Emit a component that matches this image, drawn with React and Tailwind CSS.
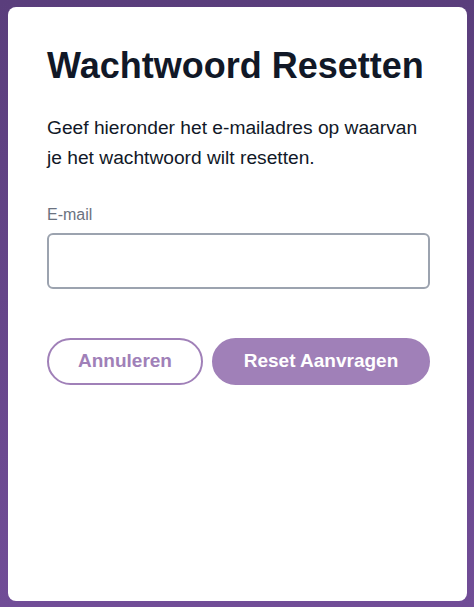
export default function App() {
  return (
    <div
      className="flex h-screen w-full bg-gradient-to-b from-[#5a3e7c] to-[#714d97] pt-[7px] pb-[6px] pl-2 pr-[7px]"
      style={{ fontFamily: '"Liberation Sans", Arial, sans-serif' }}
    >
      <div className="flex flex-1 flex-col rounded-lg bg-white pl-[39px] pr-[37px] pt-[39px]">
        <h1 className="text-[36px] font-bold leading-[40px] text-[#111827]">
          Wachtwoord Resetten
        </h1>
        <p className="mt-[27px] text-[19.2px] leading-[30px] text-[#111827]">
          Geef hieronder het e-mailadres op waarvan je het wachtwoord wilt resetten.
        </p>
        <label className="mt-[30px] block text-base leading-6 text-[#6b7280]">E-mail</label>
        <input
          type="email"
          className="mt-[6px] h-[56px] w-full rounded-md border-2 border-[#9ca3af] bg-white px-3 text-base outline-none"
        />
        <div className="mt-[49px] flex gap-[9px]">
          <button className="h-[47px] w-[156px] shrink-0 whitespace-nowrap rounded-full border-2 border-[#a080b8] bg-white text-[19px] font-bold text-[#a080b8]">
            Annuleren
          </button>
          <button className="h-[47px] flex-1 whitespace-nowrap rounded-full border-2 border-[#a080b8] bg-[#a080b8] text-[19px] font-bold text-white">
            Reset Aanvragen
          </button>
        </div>
      </div>
    </div>
  );
}
